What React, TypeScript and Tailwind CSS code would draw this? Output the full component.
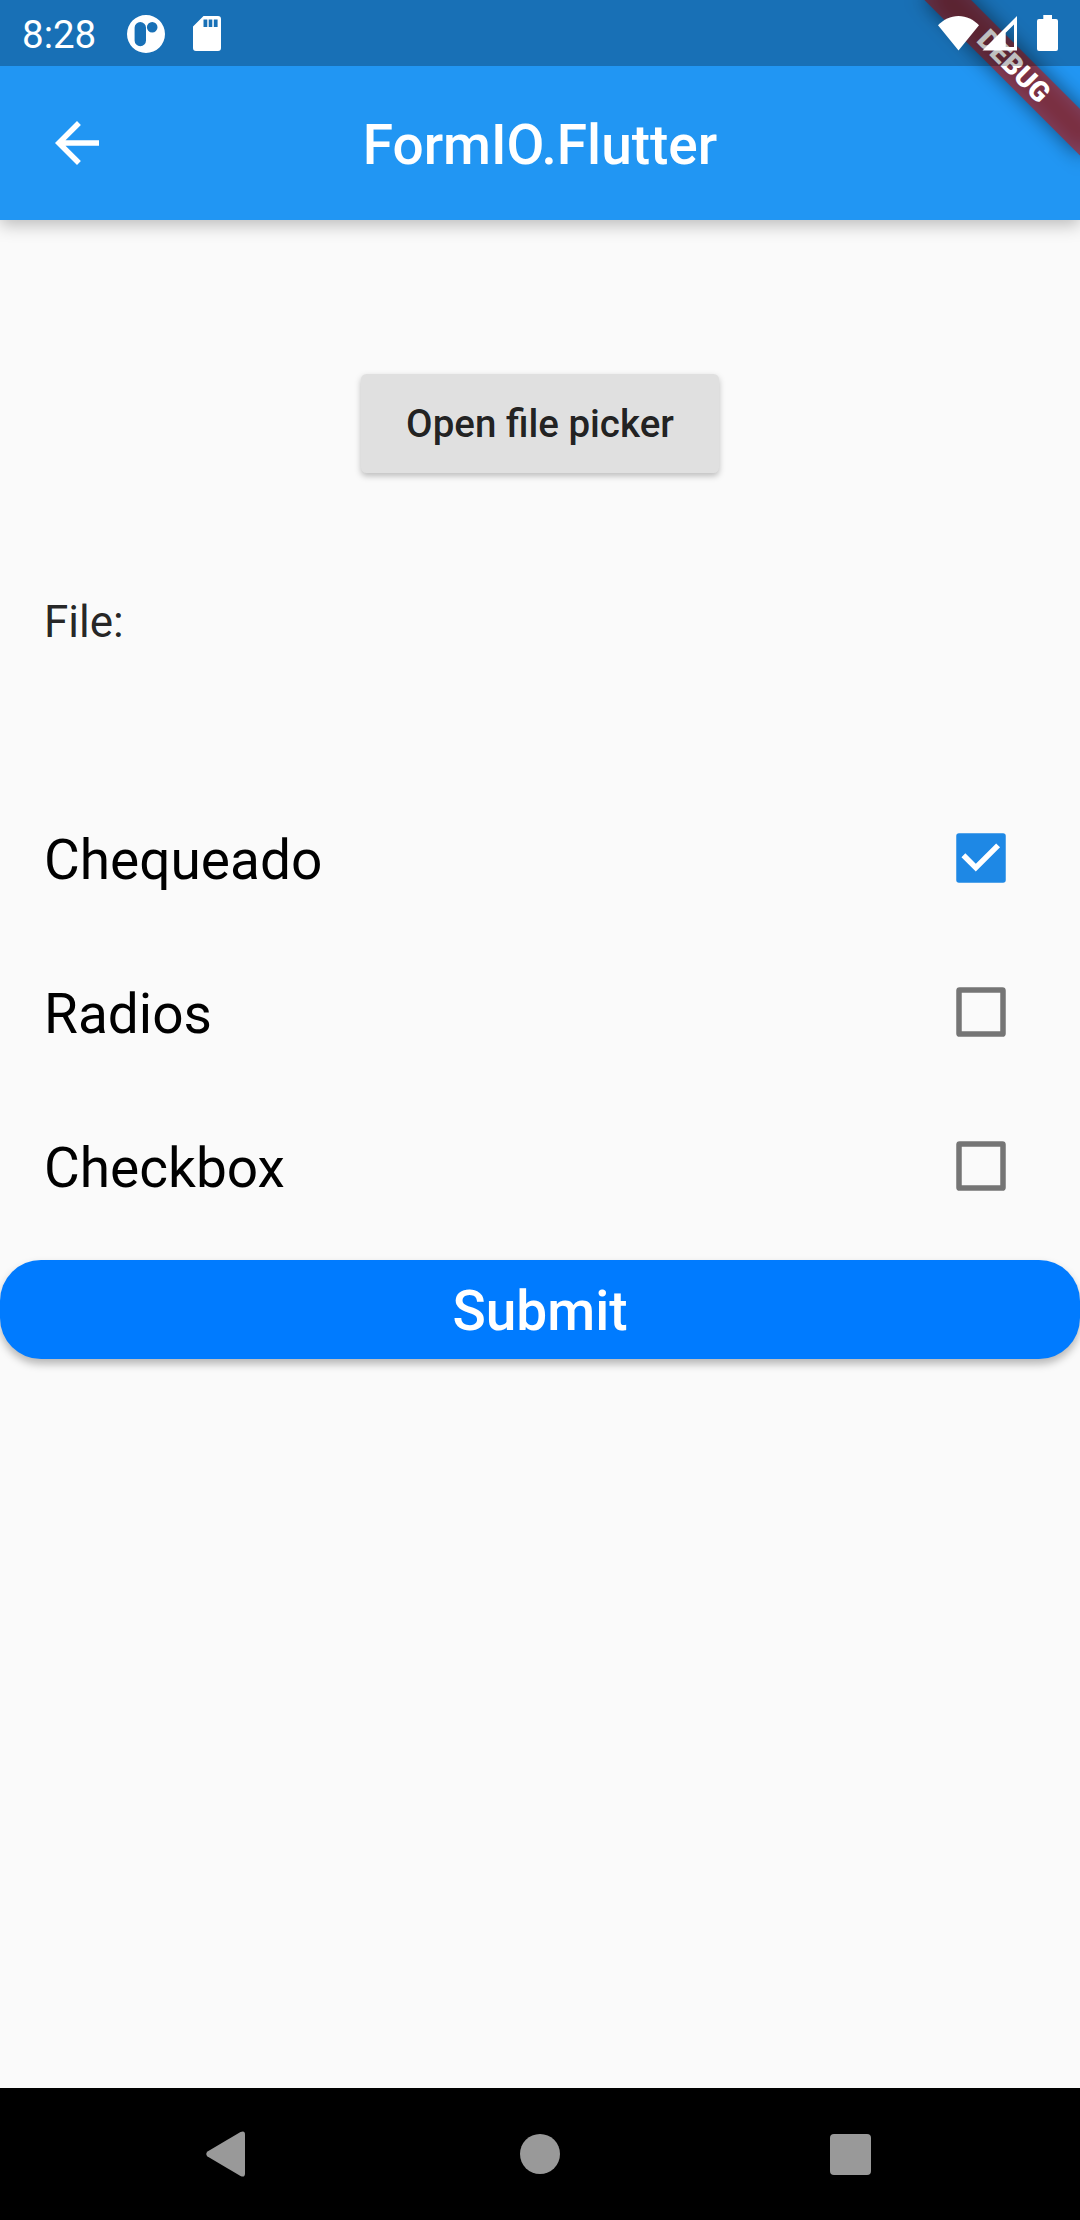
import React from "react";

const rows = [
  { label: "Chequeado", checked: true },
  { label: "Radios", checked: false },
  { label: "Checkbox", checked: false },
];

function CheckBox({ checked }: { checked: boolean }) {
  return (
    <svg width="50" height="50" viewBox="0 0 50 50" className="mr-[74px] shrink-0">
      {checked ? (
        <>
          <rect x="0.25" y="0.25" width="49.5" height="49.5" rx="2.75" fill="#1e88e5" />
          <path d="M7.4 22.3L19.8 34.7L42.1 12.4" fill="none" stroke="#fff" strokeWidth="5.5" />
        </>
      ) : (
        <rect x="3" y="3" width="44" height="44" rx="0.6" fill="none" stroke="#757575" strokeWidth="5.5" strokeLinejoin="round" />
      )}
    </svg>
  );
}

function DebugBanner() {
  return (
    <div className="pointer-events-none absolute top-0 right-0 h-[220px] w-[220px] overflow-hidden">
      <div className="absolute top-0 left-[220px] h-0 w-0 rotate-45">
        <div className="absolute top-[77px] left-[-110px] h-[33px] w-[220px] bg-black/50 blur-[10px]" />
        <div className="absolute top-[77px] left-[-110px] flex h-[33px] w-[220px] items-center justify-center bg-[#b71c1c]/63 text-[28px] leading-[33px] font-black text-white">
          DEBUG
        </div>
      </div>
    </div>
  );
}

function StatusBar() {
  return (
    <div className="relative flex h-[66px] items-center bg-black/25 text-white">
      <span className="ml-[22px] w-[75px] pt-[3px] text-[38.5px] leading-[63px]">8:28</span>
      <svg width="38" height="38" viewBox="0 0 38 38" className="mt-px ml-[30px]">
        <path
          fillRule="evenodd"
          fill="#fff"
          d="M19 0a19 19 0 1 1 0 38a19 19 0 1 1 0-38zM13.3 7A5.7 5.7 0 0 0 7.6 12.7V25.5A5.7 5.7 0 0 0 19 25.5V12.7A5.7 5.7 0 0 0 13.3 7zM25.2 7a5.3 5.3 0 1 0 0 10.6a5.3 5.3 0 1 0 0-10.6z"
        />
      </svg>
      <svg width="28" height="35" viewBox="0 0 28 35" className="mt-px ml-[28px]">
        <path
          fillRule="evenodd"
          fill="#fff"
          d="M10.5 0H25a3 3 0 0 1 3 3V32a3 3 0 0 1-3 3H3a3 3 0 0 1-3-3V10.5zM10.5 3.5V11h3.8V3.5zM15.7 3.5V11h3.6V3.5zM20.8 3.5V11h3.8V3.5z"
        />
      </svg>
      <svg width="41" height="35" viewBox="0 0 41 35" className="ml-auto">
        <path fill="#fff" d="M0 9.3C5.5 3.5 12.5 0 20.5 0S35.5 3.5 41 9.3L20.5 34.500z" />
      </svg>
      <svg width="35" height="35" viewBox="0 0 35 35" className="ml-[3px]">
        <path fillRule="evenodd" fill="#fff" d="M35 0V34.500H0.500zM32 8.500L23.700 16.800V31H32z" />
      </svg>
      <svg width="21" height="36" viewBox="0 0 21 36" className="mr-[22px] ml-[20px]">
        <path fill="#fff" d="M6.300 0H15V4H19a2 2 0 0 1 2 2V34a2 2 0 0 1-2 2H2a2 2 0 0 1-2-2V6a2 2 0 0 1 2-2H6.300z" />
      </svg>
    </div>
  );
}

export default function App() {
  return (
    <div className="flex h-[2220px] w-[1080px] flex-col overflow-hidden bg-[#fafafa] font-[Roboto,sans-serif]">
      <header className="relative h-[220px] shrink-0 bg-[#2196f3] shadow-[0_5px_16px_rgba(0,0,0,0.25)]">
        <DebugBanner />
        <StatusBar />
        <div className="grid h-[154px] grid-cols-[154px_1fr_154px] items-center">
          <svg width="44" height="44" viewBox="4 4 16 16" className="ml-[55px]">
            <path fill="#fff" d="M20 11H7.830l5.590-5.590L12 4l-8 8 8 8 1.410-1.410L7.830 13H20v-2z" />
          </svg>
          <h1 className="pt-[4px] text-center text-[55px] leading-[64px] font-medium text-white">FormIO.Flutter</h1>
        </div>
      </header>

      <main className="flex flex-1 flex-col">
        <button className="mt-[154px] h-[99px] w-[358px] self-center rounded-[5.5px] bg-[#e0e0e0] text-[38.5px] font-medium text-black/87 shadow-[0_3px_6px_rgba(0,0,0,0.25)]">
          Open file picker
        </button>
        <p className="mt-[123px] ml-[44px] text-[44px] leading-[52px] text-black/87">File:</p>
        <div className="mt-[133px] flex flex-col">
          {rows.map((row) => (
            <label key={row.label} className="flex h-[154px] items-center justify-between pl-[44px] text-[55px] leading-[64px] text-black">
              <span className="mt-[4px]">{row.label}</span>
              <CheckBox checked={row.checked} />
            </label>
          ))}
        </div>
        <button className="mt-[16.5px] h-[99px] w-full rounded-[41px] bg-[#007bff] pt-[4px] text-[55px] leading-[64px] font-medium text-white shadow-[0_5px_9px_rgba(0,0,0,0.28)]">
          Submit
        </button>
      </main>

      <nav className="flex h-[132px] shrink-0 items-center bg-black">
        <svg width="39" height="46" viewBox="0 0 39 46" className="ml-[206px]">
          <path fill="#999" d="M1.500 20.500L34.500 1Q39-1 39 3.500V42.500Q39 47 34.500 45L1.500 25.500Q-1 23 1.500 20.500z" />
        </svg>
        <div className="ml-[275px] h-[40px] w-[40px] rounded-full bg-[#999]" />
        <div className="ml-[270px] h-[41px] w-[41px] rounded-[4px] bg-[#999]" />
      </nav>
    </div>
  );
}
